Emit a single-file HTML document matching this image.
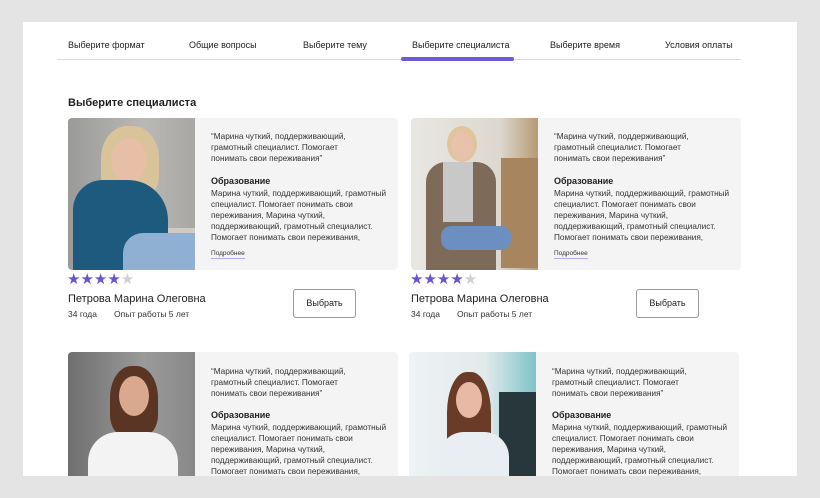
<!DOCTYPE html>
<html><head><meta charset="utf-8"><style>
*{margin:0;padding:0;box-sizing:border-box}
body{width:820px;height:498px;background:#e4e4e4;font-family:"Liberation Sans",sans-serif;color:#222;position:relative;overflow:hidden}
.panel{position:absolute;left:23px;top:22px;width:774px;height:454px;background:#fff;overflow:hidden}
.a{position:absolute;white-space:nowrap}
.tab{font-size:9px;top:18px;color:#222}
.line{position:absolute;left:34px;top:37px;width:684px;height:1px;background:#ddd8ee}
.ind{position:absolute;left:378px;top:35px;width:113px;height:4px;border-radius:2px;background:#7158d6}
.txt{position:absolute;background:#f4f4f5;border-radius:0 4px 4px 0}
.t{position:absolute;font-size:8.2px;line-height:11px;color:#333;white-space:nowrap}
.h{position:absolute;font-size:9px;font-weight:bold;color:#222}
.more{position:absolute;font-size:6.5px;color:#333;border-bottom:1px solid #b7aaf0;padding-bottom:1px}
.stars{position:absolute;font-size:15px;letter-spacing:0px;color:#6a52d0}
.stars span{color:#d0d0d0}
.name{position:absolute;font-size:11px;color:#222}
.meta{position:absolute;font-size:8.5px;color:#333}
.btn{position:absolute;width:63px;height:29px;border:1px solid #999;border-radius:3px;font-size:9px;text-align:center;line-height:27px;background:#fff}
.ph{position:absolute;overflow:hidden;border-radius:4px 0 0 4px}
</style></head><body>
<div class="panel">
<div class="a tab" style="left:45px">Выберите формат</div>
<div class="a tab" style="left:166px">Общие вопросы</div>
<div class="a tab" style="left:280px">Выберите тему</div>
<div class="a tab" style="left:389px">Выберите специалиста</div>
<div class="a tab" style="left:527px">Выберите время</div>
<div class="a tab" style="left:642px">Условия оплаты</div>
<div class="line"></div><div class="ind"></div>
<div class="a" style="left:45px;top:75px;font-size:11px;font-weight:bold">Выберите специалиста</div>

<div class="ph" style="left:45px;top:96px;width:127px;height:152px;background:linear-gradient(90deg,#9a9a98,#b9b8b5 60%,#a9a7a3)">
 <div style="position:absolute;left:8px;top:110px;width:119px;height:42px;background:#cfcac3"></div>
 <div style="position:absolute;left:33px;top:8px;width:58px;height:72px;border-radius:45% 45% 30% 30%;background:#d9c39a"></div>
 <div style="position:absolute;left:43px;top:20px;width:36px;height:44px;border-radius:50%;background:#e6bfa6"></div>
 <div style="position:absolute;left:5px;top:62px;width:95px;height:90px;border-radius:30px 40px 0 0;background:#1d5a7e"></div>
 <div style="position:absolute;left:55px;top:115px;width:72px;height:37px;border-radius:20px 0 0 0;background:#8fb0d3"></div>
</div>
<div class="txt" style="left:172px;top:96px;width:203px;height:152px"></div>
<div class="t" style="left:188px;top:109px">“Марина чуткий, поддерживающий,<br>грамотный специалист. Помогает<br>понимать свои переживания”</div>
<div class="h" style="left:188px;top:154px">Образование</div>
<div class="t" style="left:188px;top:166px">Марина чуткий, поддерживающий, грамотный<br>специалист. Помогает понимать свои<br>переживания, Марина чуткий,<br>поддерживающий, грамотный специалист.<br>Помогает понимать свои переживания,</div>
<div class="more" style="left:188px;top:228px">Подробнее</div>
<div class="stars" style="left:44px;top:248px">★★★★<span>★</span></div>
<div class="name" style="left:45px;top:271px">Петрова Марина Олеговна</div>
<div class="meta" style="left:45px;top:287px">34 года</div>
<div class="meta" style="left:91px;top:287px">Опыт работы 5 лет</div>
<div class="btn" style="left:270px;top:267px">Выбрать</div>

<div class="ph" style="left:388px;top:96px;width:127px;height:152px;background:linear-gradient(90deg,#e9e7e2,#ddd8cf 70%,#b79a73)">
 <div style="position:absolute;left:90px;top:40px;width:37px;height:110px;background:#a7865f"></div>
 <div style="position:absolute;left:36px;top:8px;width:30px;height:36px;border-radius:50%;background:#e2c49c"></div>
 <div style="position:absolute;left:40px;top:14px;width:22px;height:28px;border-radius:50%;background:#e8c3ab"></div>
 <div style="position:absolute;left:15px;top:44px;width:70px;height:108px;border-radius:20px 20px 0 0;background:#7d6a59"></div>
 <div style="position:absolute;left:32px;top:44px;width:30px;height:60px;background:#c8c8c8"></div>
 <div style="position:absolute;left:30px;top:108px;width:70px;height:24px;border-radius:10px;background:#6b8fc0"></div>
</div>
<div class="txt" style="left:515px;top:96px;width:203px;height:152px"></div>
<div class="t" style="left:531px;top:109px">“Марина чуткий, поддерживающий,<br>грамотный специалист. Помогает<br>понимать свои переживания”</div>
<div class="h" style="left:531px;top:154px">Образование</div>
<div class="t" style="left:531px;top:166px">Марина чуткий, поддерживающий, грамотный<br>специалист. Помогает понимать свои<br>переживания, Марина чуткий,<br>поддерживающий, грамотный специалист.<br>Помогает понимать свои переживания,</div>
<div class="more" style="left:531px;top:228px">Подробнее</div>
<div class="stars" style="left:387px;top:248px">★★★★<span>★</span></div>
<div class="name" style="left:388px;top:271px">Петрова Марина Олеговна</div>
<div class="meta" style="left:388px;top:287px">34 года</div>
<div class="meta" style="left:434px;top:287px">Опыт работы 5 лет</div>
<div class="btn" style="left:613px;top:267px">Выбрать</div>

<div class="ph" style="left:45px;top:330px;width:127px;height:130px;background:linear-gradient(90deg,#6f6f6f,#9a9a9a 60%,#888)">
 <div style="position:absolute;left:42px;top:14px;width:48px;height:70px;border-radius:45% 45% 30% 30%;background:#5a3524"></div>
 <div style="position:absolute;left:51px;top:24px;width:30px;height:40px;border-radius:50%;background:#d9a88f"></div>
 <div style="position:absolute;left:20px;top:80px;width:90px;height:60px;border-radius:30px 30px 0 0;background:#f3f3f3"></div>
</div>
<div class="txt" style="left:172px;top:330px;width:203px;height:130px"></div>
<div class="t" style="left:188px;top:344px">“Марина чуткий, поддерживающий,<br>грамотный специалист. Помогает<br>понимать свои переживания”</div>
<div class="h" style="left:188px;top:388px">Образование</div>
<div class="t" style="left:188px;top:400px">Марина чуткий, поддерживающий, грамотный<br>специалист. Помогает понимать свои<br>переживания, Марина чуткий,<br>поддерживающий, грамотный специалист.<br>Помогает понимать свои переживания,</div>

<div class="ph" style="left:386px;top:330px;width:127px;height:130px;background:linear-gradient(90deg,#eef3f4,#e2eaec 60%,#7fc3c9)">
 <div style="position:absolute;left:90px;top:40px;width:37px;height:90px;background:#27373c"></div>
 <div style="position:absolute;left:38px;top:20px;width:44px;height:90px;border-radius:45% 45% 20% 20%;background:#6a3c27"></div>
 <div style="position:absolute;left:47px;top:30px;width:26px;height:36px;border-radius:50%;background:#e8b9a4"></div>
 <div style="position:absolute;left:30px;top:80px;width:70px;height:60px;border-radius:25px 25px 0 0;background:#e9eef3"></div>
</div>
<div class="txt" style="left:513px;top:330px;width:203px;height:130px"></div>
<div class="t" style="left:529px;top:344px">“Марина чуткий, поддерживающий,<br>грамотный специалист. Помогает<br>понимать свои переживания”</div>
<div class="h" style="left:529px;top:388px">Образование</div>
<div class="t" style="left:529px;top:400px">Марина чуткий, поддерживающий, грамотный<br>специалист. Помогает понимать свои<br>переживания, Марина чуткий,<br>поддерживающий, грамотный специалист.<br>Помогает понимать свои переживания,</div>
</div>
</body></html>
